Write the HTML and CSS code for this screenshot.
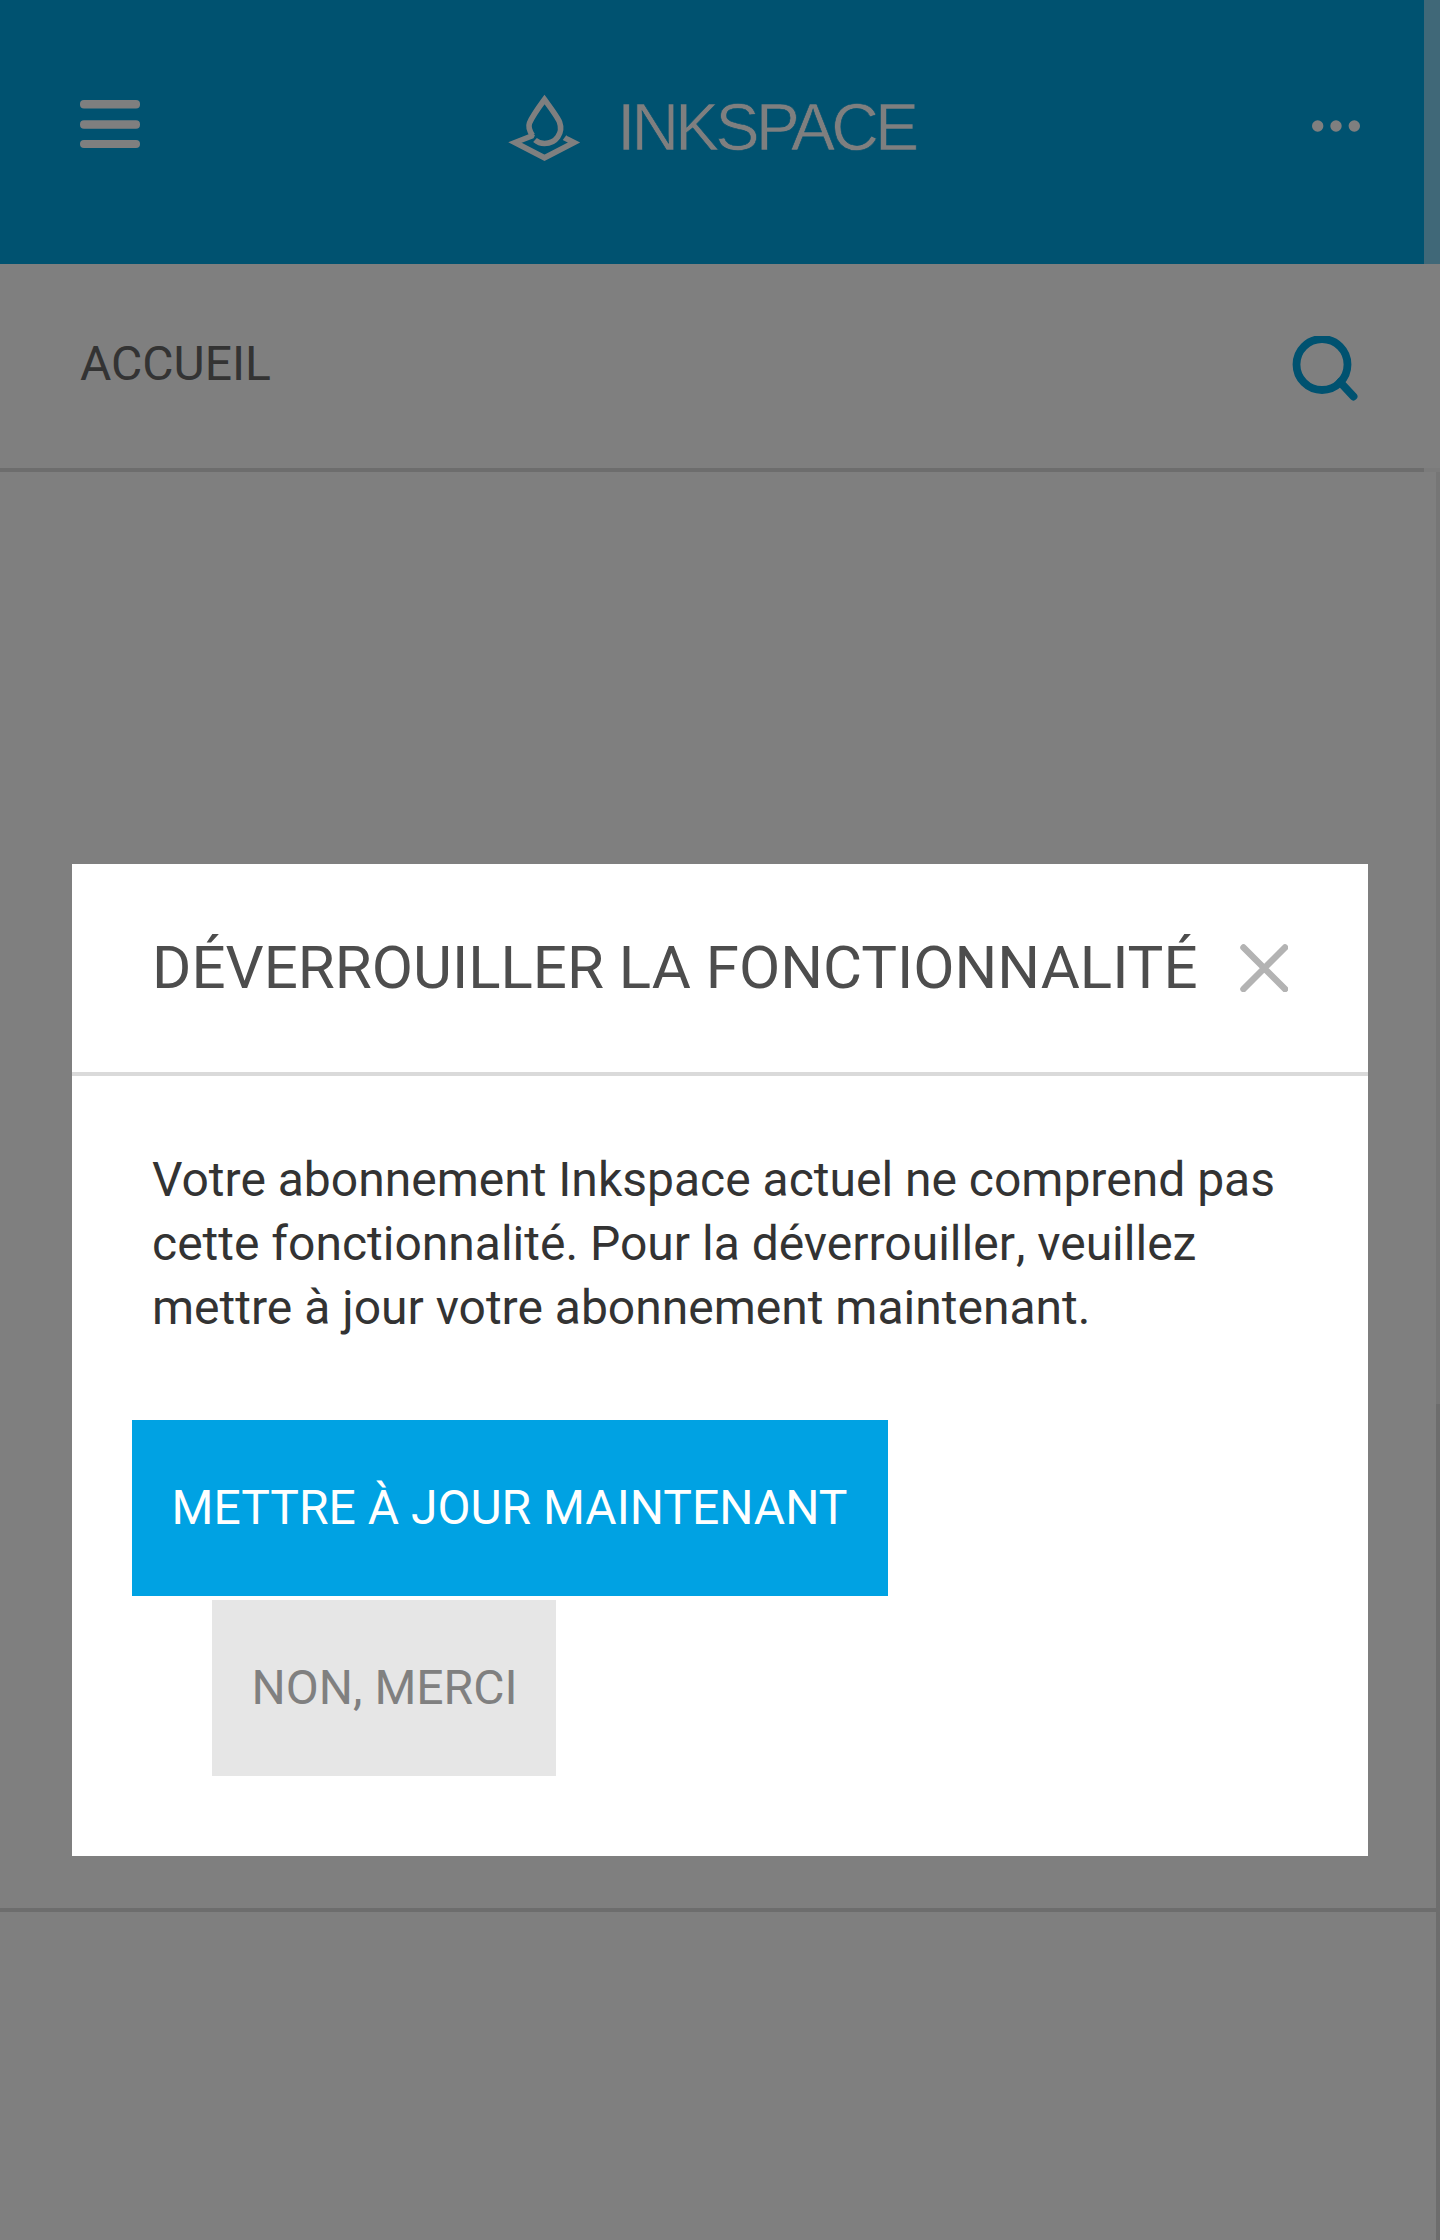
FILE: index.html
```html
<!DOCTYPE html>
<html lang="fr">
<head>
<meta charset="utf-8">
<title>Inkspace</title>
<link rel="stylesheet" href="styles.css">
</head>
<body>
<div class="page">
  <header class="topbar">
    <div class="topbar-main">
      <svg class="menu" width="60" height="48" viewBox="0 0 60 48"><g fill="#fff"><rect width="60" height="8.5" rx="4"/><rect y="20.3" width="60" height="8.5" rx="4"/><rect y="40" width="60" height="8" rx="4"/></g></svg>
      <svg class="logo" width="412" height="76" viewBox="0 0 412 76">
        <g fill="none" stroke="#fff" stroke-width="5.600">
          <path d="M22.500 46L21.500 48L5 54.500L34.500 69.800L64 54.500L57 51L58.500 49"/>
          <path d="M22.500 47.500C19.500 43 18 39 19.500 35C21.500 30 29 19 34.500 11.500C40 19 47.500 29 49.500 34C53.500 45 46 55.500 34.500 55.500Q29 55.500 25 52"/>
        </g>
        <text class="wordmark" x="107" y="62" textLength="302" lengthAdjust="spacing">INKSPACE</text>
      </svg>
      <svg class="more" width="48" height="12" viewBox="0 0 48 12"><g fill="#fff"><circle cx="5.700" cy="6" r="5.700"/><circle cx="24" cy="6" r="5.700"/><circle cx="42.300" cy="6" r="5.700"/></g></svg>
    </div>
    <div class="topbar-gutter"></div>
  </header>
  <nav class="crumbs">
    <span class="crumb">ACCUEIL</span>
    <svg class="search" width="66" height="66" viewBox="0 0 66 66"><g fill="none" stroke="#00a4e1" stroke-width="7.800"><circle cx="30" cy="28.500" r="25.500"/><path d="M48 46L61.500 60.500" stroke-linecap="round"/></g></svg>
  </nav>
  <div class="rule"><i></i></div>
  <main class="content">
    <div class="panels"><div class="panel"></div><div class="panel-rest"></div></div>
    <div class="scroll"><div class="scroll-upper"></div><div class="scroll-lower"></div></div>
  </main>
</div>
<div class="overlay">
  <section class="dialog">
    <div class="dialog-head">
      <h1>DÉVERROUILLER LA FONCTIONNALITÉ</h1>
      <svg class="close" width="48" height="48" viewBox="0 0 48 48"><path d="M3.500 3.500L45 45M45 3.500L3.500 45" fill="none" stroke="#b3b3b3" stroke-width="6.500" stroke-linecap="round"/></svg>
    </div>
    <p><span class="kern-v">V</span>otre abonnement Inkspace actuel ne comprend pas<br>cette fonctionnalité. Pour la déverrouille<span class="kern-r">r</span>, veuillez<br>mettre à jour votre abonnement maintenant.</p>
    <div class="actions">
      <button class="btn primary">METTRE À JOUR MAINTENANT</button>
      <button class="btn secondary">NON, MERCI</button>
    </div>
  </section>
</div>
</body>
</html>
```
FILE: styles.css
```css
* { box-sizing: border-box; }
body { margin: 0; font-family: Roboto, sans-serif; font-size: 48px; background: #fff; }
svg { display: block; flex: none; }
.page { height: 2240px; display: flex; flex-direction: column; overflow: hidden; }
.topbar { height: 264px; display: flex; }
.topbar-main { width: 1424px; padding: 88px 64px 0 80px; background: #00a4e1; display: flex; align-items: flex-start; }
.topbar-gutter { flex: 1; background: #80d1f1; }
.menu { margin-top: 12px; }
.logo { margin-left: 370px; overflow: visible; }
.wordmark { font-family: "Liberation Sans", sans-serif; font-size: 66px; fill: #fff; stroke: #00a4e1; stroke-width: 0.6px; }
.more { margin: 32px 0 0 auto; }
.crumbs { height: 204px; padding: 0 82px 0 80px; display: flex; justify-content: space-between; }
.crumb { line-height: 56px; margin-top: 72px; color: #666; }
.search { margin-top: 72px; }
.rule { height: 4px; background: #f6f6f6; }
.rule i { display: block; width: 1424px; height: 4px; background: #dadada; }
.content { flex: 1; display: flex; }
.panels { flex: 1; }
.panel { height: 1440px; border-bottom: 4px solid #dadada; }
.scroll { width: 4px; display: flex; flex-direction: column; }
.scroll-upper { height: 932px; background: #ececec; }
.scroll-lower { flex: 1; background: #dadada; }
.overlay { position: absolute; top: 0; left: 0; width: 1440px; height: 2240px; padding: 864px 72px 0; background: rgba(0, 0, 0, 0.5); }
.dialog { height: 992px; background: #fff; }
.dialog-head { height: 212px; padding: 0 80px; border-bottom: 4px solid #dadada; display: flex; align-items: center; justify-content: space-between; }
h1 { margin: 0; font-size: 60px; font-weight: 400; line-height: 72px; color: #4d4d4d; white-space: nowrap; }
p { margin: 0; padding: 72px 80px 0; line-height: 64px; color: #333; white-space: nowrap; }
.kern-v { letter-spacing: 0; }
.kern-r { letter-spacing: 1px; }
.actions { padding: 80px 60px 0; display: flex; flex-direction: column; align-items: flex-start; gap: 4px; }
.btn { height: 176px; border: 0; padding: 0 0 2px; font: inherit; white-space: nowrap; }
.primary { width: 756px; padding-right: 1px; background: #00a2e3; color: #fff; }
.secondary { width: 344px; margin-left: 80px; padding-left: 1px; background: #e6e6e6; color: #808080; }
```
